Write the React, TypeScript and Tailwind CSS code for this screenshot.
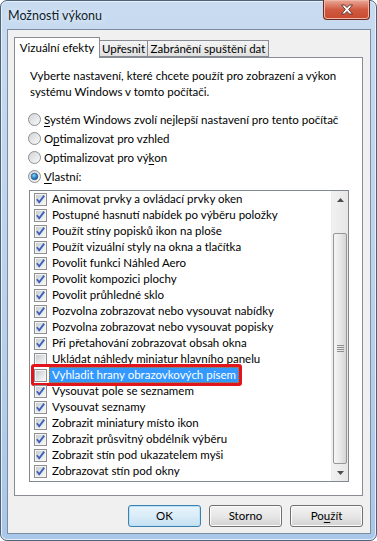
import React from "react";

type Item = { label: string; checked: boolean; selected?: boolean };

const items: Item[] = [
  { label: "Animovat prvky a ovládací prvky oken", checked: true },
  { label: "Postupné hasnutí nabídek po výběru položky", checked: true },
  { label: "Použít stíny popisků ikon na ploše", checked: true },
  { label: "Použít vizuální styly na okna a tlačítka", checked: true },
  { label: "Povolit funkci Náhled Aero", checked: true },
  { label: "Povolit kompozici plochy", checked: true },
  { label: "Povolit průhledné sklo", checked: true },
  { label: "Pozvolna zobrazovat nebo vysouvat nabídky", checked: true },
  { label: "Pozvolna zobrazovat nebo vysouvat popisky", checked: true },
  { label: "Při přetahování zobrazovat obsah okna", checked: true },
  { label: "Ukládat náhledy miniatur hlavního panelu", checked: false },
  { label: "Vyhladit hrany obrazovkových písem", checked: false, selected: true },
  { label: "Vysouvat pole se seznamem", checked: true },
  { label: "Vysouvat seznamy", checked: true },
  { label: "Zobrazit miniatury místo ikon", checked: true },
  { label: "Zobrazit průsvitný obdélník výběru", checked: true },
  { label: "Zobrazit stín pod ukazatelem myši", checked: true },
  { label: "Zobrazovat stín pod okny", checked: true },
];

function CheckBox({ checked }: { checked: boolean }) {
  return (
    <svg width="13" height="13" viewBox="0 0 13 13" className="shrink-0">
      <defs>
        <linearGradient id="cbIn" x1="0" y1="0" x2="1" y2="1">
          <stop offset="0" stopColor="#c9ccd1" />
          <stop offset="1" stopColor="#f7f7f7" />
        </linearGradient>
      </defs>
      <rect x="0.5" y="0.5" width="12" height="12" fill="#f5f5f5" stroke="#8e8f8f" />
      <rect x="2" y="2" width="9" height="9" fill="url(#cbIn)" />
      {checked && (
        <path d="M2.8 6.3 L5.2 9.2 L10.2 2.6" fill="none" stroke="#3d5fb8" strokeWidth="1.8" />
      )}
    </svg>
  );
}

function Radio({ on }: { on?: boolean }) {
  return (
    <svg width="13" height="13" viewBox="0 0 13 13" className="shrink-0">
      <defs>
        <linearGradient id="rdIn" x1="0" y1="0" x2="1" y2="1">
          <stop offset="0" stopColor="#cfd2d6" />
          <stop offset="1" stopColor="#fbfbfb" />
        </linearGradient>
        <radialGradient id="rdDot" cx="0.4" cy="0.35" r="0.7">
          <stop offset="0" stopColor="#8fd6f6" />
          <stop offset="0.55" stopColor="#2a86c8" />
          <stop offset="1" stopColor="#1b4f8c" />
        </radialGradient>
      </defs>
      <circle cx="6.5" cy="6.5" r="6" fill="url(#rdIn)" stroke="#8e8f8f" />
      {on && <circle cx="6.5" cy="6.5" r="3.3" fill="url(#rdDot)" stroke="#2d5b8a" strokeWidth="0.7" />}
    </svg>
  );
}

function U({ children }: { children: React.ReactNode }) {
  return <span className="underline underline-offset-2">{children}</span>;
}

function Btn({ children, primary }: { children: React.ReactNode; primary?: boolean }) {
  return (
    <div
      className={
        primary
          ? "w-[73px] h-[22px] flex items-center justify-center rounded-[3px] border border-[#3c7fb1] bg-gradient-to-b from-[#e9f4fc] via-[#d9ecf8] to-[#c5e0f3] shadow-[inset_0_0_0_1px_#b9e2f7]"
          : "w-[73px] h-[22px] flex items-center justify-center rounded-[3px] border border-[#707070] bg-gradient-to-b from-[#f2f2f2] via-[#e7e7e7] to-[#d2d2d2] shadow-[inset_0_0_0_1px_#fcfcfc]"
      }
    >
      {children}
    </div>
  );
}

export default function App() {
  return (
    <div
      className="w-[377px] h-[541px] flex flex-col rounded-[7px] border border-[#4f6378] bg-gradient-to-b from-[#c8dbf0] via-[#bcd3ec] to-[#a9c7e8] text-[11.5px] text-black shadow-[inset_0_0_0_1px_#e6f0fa]"
      style={{ fontFamily: "Lato, 'Liberation Sans', sans-serif" }}
    >
      {/* title bar */}
      <div className="h-[28px] flex items-start justify-between shrink-0">
        <div className="pl-[7px] pt-[6px] text-[12.5px] text-[#0f1e2e] [text-shadow:0_0_6px_#ffffff]">Možnosti výkonu</div>
        <div className="mr-[6px] -mt-px w-[47px] h-[20px] flex items-center justify-center rounded-b-[4px] border border-t-0 border-[#6b2b22] bg-gradient-to-b from-[#e9a99a] via-[#d15a42] to-[#c74a2e] shadow-[inset_0_0_0_1px_#f0b6a8]">
          <svg width="14" height="11" viewBox="0 0 14 11">
            <path
              d="M1.5 1 H4.5 L7 3.6 L9.5 1 H12.5 L8.7 5.5 L12.5 10 H9.5 L7 7.4 L4.5 10 H1.5 L5.3 5.5 Z"
              fill="#ffffff"
              stroke="#50302c"
              strokeWidth="0.9"
              strokeLinejoin="round"
            />
          </svg>
        </div>
      </div>

      {/* client area */}
      <div className="ml-[6px] w-[364px] h-[505px] border border-[#7c8da1] bg-[#f0f0f0] flex flex-col pl-[6px] pt-[7px]">
        {/* tabs */}
        <div className="flex items-end h-[20px]">
          <div className="h-[21px] w-[86px] -mb-px relative z-10 border border-b-0 border-[#898c95] bg-white flex items-center justify-center pb-[1px]">
            Vizuální efekty
          </div>
          <div className="h-[17px] w-[49px] -ml-px border border-[#898c95] bg-gradient-to-b from-[#f4f4f4] to-[#e0e0e0] flex items-center justify-center">
            Upřesnit
          </div>
          <div className="h-[17px] w-[122px] -ml-px border border-[#898c95] bg-gradient-to-b from-[#f4f4f4] to-[#e0e0e0] flex items-center justify-center">
            Zabránění spuštění dat
          </div>
        </div>

        {/* tab panel */}
        <div className="w-[349px] h-[439px] border border-[#898c95] bg-white flex flex-col pt-[10px]">
          <p className="ml-[15px] leading-[16px]">
            Vyberte nastavení, které chcete použít pro zobrazení a výkon
            <br />
            systému Windows v tomto počítači.
          </p>

          <div className="mt-[10px] ml-[13px] flex flex-col">
            <div className="h-[19px] flex items-center gap-[3px] whitespace-nowrap">
              <Radio />
              <span>
                <U>S</U>ystém Windows zvolí nejlepší nastavení pro tento počítač
              </span>
            </div>
            <div className="h-[19px] flex items-center gap-[3px]">
              <Radio />
              <span>
                O<U>p</U>timalizovat pro vzhled
              </span>
            </div>
            <div className="h-[19px] flex items-center gap-[3px]">
              <Radio />
              <span>
                Optimalizovat pro vý<U>k</U>on
              </span>
            </div>
            <div className="h-[19px] flex items-center gap-[3px]">
              <Radio on />
              <span>
                <U>V</U>lastní:
              </span>
            </div>
          </div>

          {/* list box */}
          <div className="mt-[4px] ml-[14px] w-[320px] h-[292px] border border-[#828790] bg-white flex">
            <div className="flex-1 flex flex-col">
              {items.map((it) => (
                <div key={it.label} className="h-[16px] shrink-0 flex items-center pl-[4px]">
                  <div className="relative flex items-center">
                    <CheckBox checked={it.checked} />
                    <span
                      className={
                        it.selected
                          ? "ml-[2px] px-[2px] h-[16px] leading-[14px] bg-[#3399ff] text-white border border-dotted border-[#cc6600] whitespace-nowrap"
                          : "ml-[3px] px-[2px] whitespace-nowrap"
                      }
                    >
                      {it.label}
                    </span>
                    {it.selected && (
                      <div className="absolute -left-[3px] -right-[3px] -top-[3px] -bottom-[3px] rounded-[3px] border-[3px] border-[#e2151c]" />
                    )}
                  </div>
                </div>
              ))}
            </div>

            {/* scrollbar */}
            <div className="w-[17px] flex flex-col bg-gradient-to-r from-[#f1f1f1] to-[#e6e6e6] border-l border-[#eeeeee]">
              <div className="h-[17px] flex items-center justify-center">
                <svg width="7" height="4" viewBox="0 0 7 4">
                  <path d="M0 4 L3.5 0 L7 4 Z" fill="#4d4d4d" />
                </svg>
              </div>
              <div className="h-[25px]" />
              <div className="flex-1 mx-[1px] rounded-[2px] border border-[#979797] bg-gradient-to-r from-[#f5f5f5] via-[#e9e9e9] to-[#d5d5d5] flex items-center justify-center">
                <div className="flex flex-col gap-[1px]">
                  <div className="w-[7px] h-px bg-[#8f8f8f]" />
                  <div className="w-[7px] h-px bg-[#8f8f8f]" />
                  <div className="w-[7px] h-px bg-[#8f8f8f]" />
                  <div className="w-[7px] h-px bg-[#8f8f8f]" />
                </div>
              </div>
              <div className="h-[17px] flex items-center justify-center">
                <svg width="7" height="4" viewBox="0 0 7 4">
                  <path d="M0 0 L3.5 4 L7 0 Z" fill="#4d4d4d" />
                </svg>
              </div>
            </div>
          </div>
        </div>

        {/* buttons */}
        <div className="mt-[9px] flex justify-end gap-[8px] pr-[7px]">
          <Btn primary>OK</Btn>
          <Btn>Storno</Btn>
          <Btn>
            Po<U>u</U>žít
          </Btn>
        </div>
      </div>
    </div>
  );
}
